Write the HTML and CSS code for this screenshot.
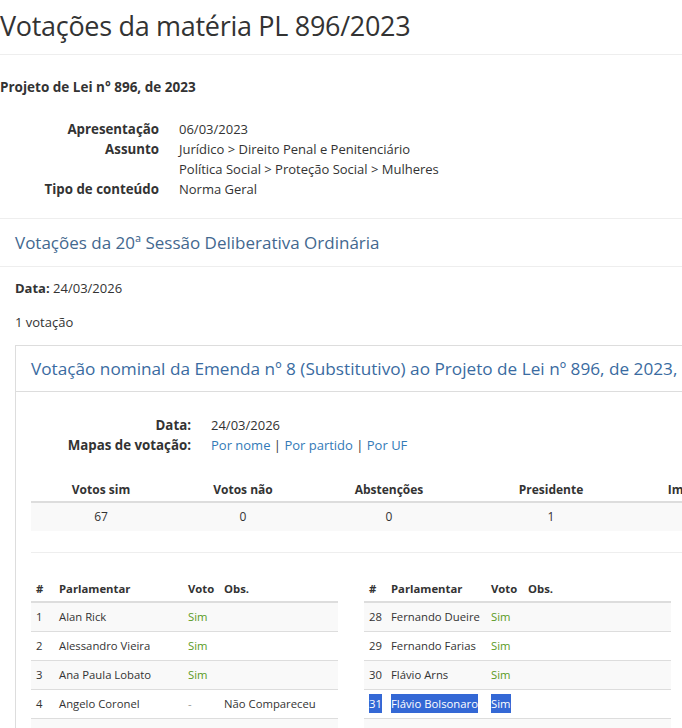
FILE: index.html
```html
<!DOCTYPE html>
<html lang="pt-BR">
<head>
<meta charset="utf-8">
<title>Votações da matéria PL 896/2023</title>
<link rel="stylesheet" href="styles.css">
</head>
<body>
<div class="page">
  <div class="page-header">
    <h1>Votações da matéria PL 896/2023</h1>
  </div>

  <div class="materia">
    <h2 class="materia-title">Projeto de Lei n° 896, de 2023</h2>
    <dl class="dl-h">
      <dt>Apresentação</dt>
      <dd>06/03/2023</dd>
      <dt>Assunto</dt>
      <dd>Jurídico &gt; Direito Penal e Penitenciário</dd>
      <dd>Política Social &gt; Proteção Social &gt; Mulheres</dd>
      <dt>Tipo de conteúdo</dt>
      <dd>Norma Geral</dd>
    </dl>
  </div>

  <section class="sessao">
    <h3 class="sessao-title">Votações da 20ª Sessão Deliberativa Ordinária</h3>
    <div class="sessao-body">
      <p class="sessao-data"><b>Data:</b> 24/03/2026</p>
      <p class="sessao-count">1 votação</p>

      <div class="panel">
        <div class="panel-heading">Votação nominal da Emenda nº 8 (Substitutivo) ao Projeto de Lei nº 896, de 2023,&nbsp; que altera a legislação penal</div>
        <div class="panel-body">
          <dl class="dl-h">
            <dt>Data:</dt>
            <dd>24/03/2026</dd>
            <dt>Mapas de votação:</dt>
            <dd><a href="#">Por nome</a> | <a href="#">Por partido</a> | <a href="#">Por UF</a></dd>
          </dl>

          <table class="resumo">
            <thead>
              <tr>
                <th class="r1">Votos sim</th>
                <th class="r2">Votos não</th>
                <th class="r3">Abstenções</th>
                <th class="r4">Presidente</th>
                <th class="r5">Impedidos</th>
                <th>Total</th>
              </tr>
            </thead>
            <tbody>
              <tr>
                <td>67</td>
                <td>0</td>
                <td>0</td>
                <td>1</td>
                <td>0</td>
                <td>68</td>
              </tr>
            </tbody>
          </table>

          <hr class="sep">

          <div class="listas">
            <table class="lista lista-a">
              <thead>
                <tr>
                  <th class="w-num">#</th>
                  <th class="w-nome">Parlamentar</th>
                  <th class="w-voto">Voto</th>
                  <th class="w-obs">Obs.</th>
                </tr>
              </thead>
              <tbody>
                <tr><td>1</td><td>Alan Rick</td><td class="sim">Sim</td><td></td></tr>
                <tr><td>2</td><td>Alessandro Vieira</td><td class="sim">Sim</td><td></td></tr>
                <tr><td>3</td><td>Ana Paula Lobato</td><td class="sim">Sim</td><td></td></tr>
                <tr><td>4</td><td>Angelo Coronel</td><td class="nada">-</td><td>Não Compareceu</td></tr>
                <tr class="empty"><td></td><td></td><td></td><td></td></tr>
              </tbody>
            </table>

            <table class="lista lista-b">
              <thead>
                <tr>
                  <th class="w-num">#</th>
                  <th class="w-nome">Parlamentar</th>
                  <th class="w-voto">Voto</th>
                  <th class="w-obs">Obs.</th>
                </tr>
              </thead>
              <tbody>
                <tr><td>28</td><td>Fernando Dueire</td><td class="sim">Sim</td><td></td></tr>
                <tr><td>29</td><td>Fernando Farias</td><td class="sim">Sim</td><td></td></tr>
                <tr><td>30</td><td>Flávio Arns</td><td class="sim">Sim</td><td></td></tr>
                <tr><td><span class="sel">31</span></td><td><span class="sel">Flávio Bolsonaro</span></td><td><span class="sel">Sim</span></td><td></td></tr>
                <tr class="empty"><td></td><td></td><td></td><td></td></tr>
              </tbody>
            </table>
          </div>
        </div>
      </div>
    </div>
  </section>
</div>
</body>
</html>
```

FILE: styles.css
```css
html {
  overflow: hidden;
}

body {
  margin: 0;
  background: #fff;
  color: #333;
  font-family: "Open Sans", "Noto Sans", sans-serif;
  font-size: 13px;
  line-height: 20px;
}

.page {
  width: 1000px;
}

/* Page header */
.page-header {
  padding: 9px 0 11px;
  border-bottom: 1px solid #eee;
}

.page-header h1 {
  margin: 0;
  font-size: 27px;
  line-height: 34px;
  font-weight: 400;
  letter-spacing: -0.3px;
  color: #333;
}

/* Matéria */
.materia {
  padding: 22px 0 19px;
  border-bottom: 1px solid #eee;
}

.materia-title {
  margin: 0 0 22px;
  font-size: 13.5px;
  line-height: 20px;
  font-weight: 700;
}

.dl-h {
  display: grid;
  grid-template-columns: 159px 1fr;
  column-gap: 20px;
  margin: 0;
}

.dl-h dt {
  grid-column: 1;
  text-align: right;
  font-weight: 700;
  font-size: 13.3px;
}

.dl-h dd {
  grid-column: 2;
  margin: 0;
}

/* Sessão */
.sessao-title {
  margin: 0;
  padding: 12px 15px 11px;
  border-bottom: 1px solid #eee;
  font-size: 17px;
  line-height: 24px;
  font-weight: 400;
  color: #43688f;
}

.sessao-body {
  padding: 0 15px;
}

.sessao-data {
  margin: 11px 0 0;
}

.sessao-count {
  margin: 14px 0 0;
}

/* Panel */
.panel {
  margin-top: 13px;
  border: 1px solid #ddd;
  border-right: 0;
}

.panel-heading {
  padding: 11px 15px 10px;
  border-bottom: 1px solid #ddd;
  font-size: 17.2px;
  line-height: 24px;
  color: #3a6ba1;
  white-space: nowrap;
}

.panel-body {
  padding: 23px 15px 15px;
}

.panel-body .dl-h {
  grid-template-columns: 160px 1fr;
}

a {
  color: #337ab7;
  text-decoration: none;
}

/* Resumo */
.resumo {
  width: 100%;
  margin-top: 15px;
  border-collapse: separate;
  border-spacing: 0;
  table-layout: fixed;
  font-size: 12px;
}

.resumo th,
.resumo td {
  box-sizing: border-box;
  text-align: center;
}

.resumo th {
  padding: 10px 8px 1px;
  line-height: 20px;
  font-weight: 700;
  border-bottom: 2px solid #ddd;
  white-space: nowrap;
}

.resumo td {
  padding: 4px 8px;
  line-height: 20px;
  background: #f9f9f9;
}

.resumo .r1 { width: 140px; }
.resumo .r2 { width: 144px; }
.resumo .r3 { width: 148px; }
.resumo .r4 { width: 176px; }
.resumo .r5 { width: 120px; }

.sep {
  margin: 21px 0 0;
  border: 0;
  border-top: 1px solid #eee;
  height: 0;
}

/* Listas */
.listas {
  display: flex;
  gap: 26px;
  margin-top: 21px;
  align-items: flex-start;
}

.lista {
  width: 307px;
  flex: none;
  table-layout: fixed;
  border-collapse: separate;
  border-spacing: 0;
  font-size: 11.3px;
  line-height: 20px;
}

.lista th,
.lista td {
  box-sizing: border-box;
  text-align: left;
  white-space: nowrap;
  overflow: hidden;
}

.lista th {
  padding: 5px 5px 2px;
  font-weight: 700;
  border-bottom: 2px solid #ddd;
}

.lista td {
  padding: 4px 5px;
  border-bottom: 1px solid #ddd;
}

.lista tr.empty td {
  height: 29px;
}

.lista tbody tr:nth-child(odd) td {
  background: #f9f9f9;
}

.lista-a .w-num { width: 23px; }
.lista-a .w-nome { width: 129px; }
.lista-a .w-voto { width: 36px; }
.lista-a .w-obs { width: 119px; }

.lista-b .w-num { width: 22px; }
.lista-b .w-nome { width: 100px; }
.lista-b .w-voto { width: 37px; }
.lista-b .w-obs { width: 148px; }

.sim {
  color: #5a9a1c;
}

.nada {
  color: #999;
}

.sel {
  background: #3468d5;
  color: #fff;
  padding: 2px 0;
}
```
